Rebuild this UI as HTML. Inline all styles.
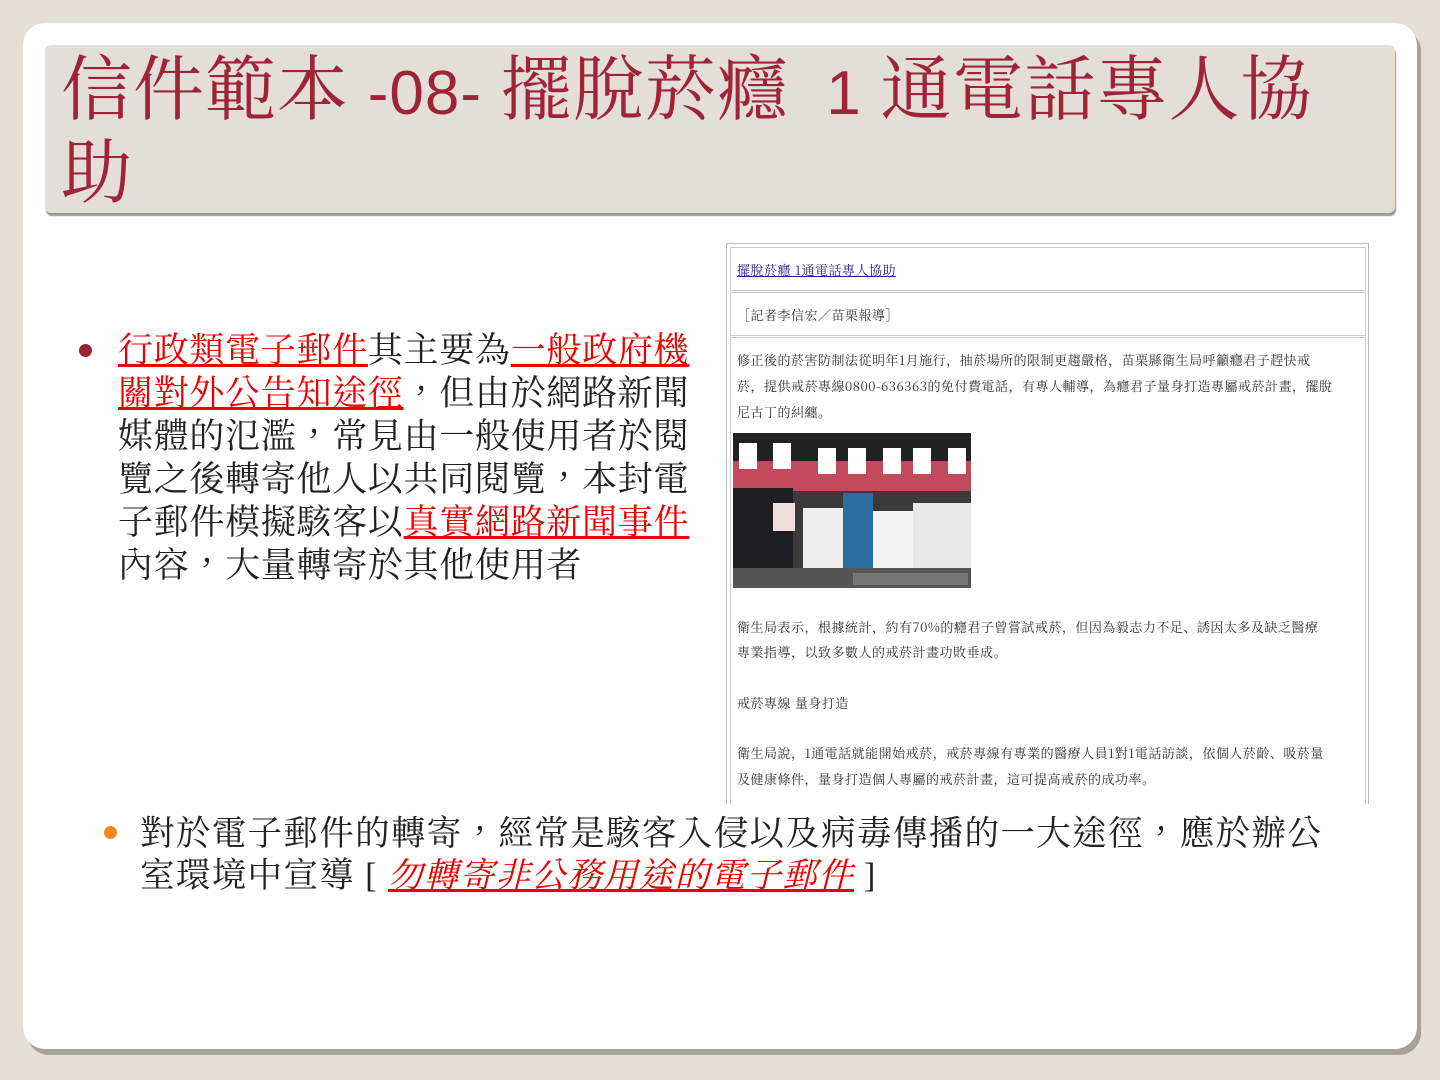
<!DOCTYPE html>
<html><head><meta charset="utf-8"><style>
body{margin:0;width:1440px;height:1080px;background:#e5dfd5;position:relative;overflow:hidden;font-family:"Liberation Serif","Noto Serif CJK TC","Noto Serif CJK SC",serif}
.card{position:absolute;left:23px;top:23px;width:1394px;height:1026px;background:#fff;border-radius:22px;box-shadow:4px 6px 0 #a8a196}
.title{position:absolute;left:45px;top:45px;width:1350px;height:168px;background:#e4dfd6;border-radius:6px;box-shadow:1px 3px 1px #9d978e}
.title div{position:absolute;left:16px;top:6px;font-family:"Liberation Serif","Noto Serif CJK SC",serif;font-size:71px;line-height:80px;color:#a02337;white-space:nowrap;letter-spacing:1px}
.title span{font-family:"Liberation Sans",sans-serif;font-size:62px}
.b1{position:absolute;left:118px;top:329px;width:590px;font-size:35px;letter-spacing:0.7px;line-height:43px;color:#222}
.dot{position:absolute;width:13px;height:13px;border-radius:50%}
a{color:#e00;text-decoration:underline}
.b2{position:absolute;left:140px;top:813px;width:1200px;font-size:34.5px;letter-spacing:1.35px;line-height:42px;color:#222}
.shot{position:absolute;left:726px;top:243px;width:641px;height:560px;border:1px solid #bbb;border-bottom:none;background:#fff;font-family:"Noto Serif CJK SC",serif;font-size:13px;letter-spacing:0.5px;color:#333;overflow:hidden}
.cell{position:absolute;left:3px;right:2px;border:1px solid #ccc}
.p{position:absolute;left:6px;white-space:nowrap}
.photo{position:absolute;width:238px;height:155px;background:#3a3a3a;overflow:hidden}
.photo i{position:absolute;display:block}
</style></head><body>
<div class="card"></div>
<div class="title"><div>信件範本 <span>-08-</span> 擺脫菸癮&nbsp; <span>1</span> 通電話專人協<br>助</div></div>
<div class="dot" style="left:79px;top:344px;background:#9b2335"></div>
<div class="b1"><a>行政類電子郵件</a>其主要為<a>一般政府機關對外公告知途徑</a>，但由於網路新聞媒體的氾濫，常見由一般使用者於閱覽之後轉寄他人以共同閱覽，本封電子郵件模擬駭客以<a>真實網路新聞事件</a>內容，大量轉寄於其他使用者</div>
<div class="shot">
<div class="cell" style="top:3px;height:42px"><span class="p" style="top:12px;color:#22228a;text-decoration:underline">擺脫菸癮 1通電話專人協助</span></div>
<div class="cell" style="top:48px;height:42px"><span class="p" style="top:12px">［記者李信宏／苗栗報導］</span></div>
<div class="cell" style="top:93px;height:480px;border-bottom:none">
<span class="p" style="top:12px">修正後的菸害防制法從明年1月施行，抽菸場所的限制更趨嚴格，苗栗縣衛生局呼籲癮君子趕快戒</span>
<span class="p" style="top:38px">菸，提供戒菸專線0800-636363的免付費電話，有專人輔導，為癮君子量身打造專屬戒菸計畫，擺脫</span>
<span class="p" style="top:64px">尼古丁的糾纏。</span>
<div class="photo" style="top:95px;left:2px">
<i style="left:0;top:0;width:238px;height:40px;background:#222"></i>
<i style="left:0;top:28px;width:238px;height:30px;background:#c34a5c"></i>
<i style="left:6px;top:10px;width:18px;height:26px;background:#fff"></i>
<i style="left:40px;top:10px;width:18px;height:26px;background:#fff"></i>
<i style="left:85px;top:15px;width:18px;height:26px;background:#fff"></i>
<i style="left:115px;top:15px;width:18px;height:26px;background:#fff"></i>
<i style="left:150px;top:15px;width:18px;height:26px;background:#fff"></i>
<i style="left:180px;top:15px;width:18px;height:26px;background:#fff"></i>
<i style="left:215px;top:15px;width:18px;height:26px;background:#fff"></i>
<i style="left:0;top:55px;width:60px;height:100px;background:#1d1d22"></i>
<i style="left:40px;top:70px;width:22px;height:28px;background:#f1dede"></i>
<i style="left:70px;top:75px;width:40px;height:80px;background:#eee"></i>
<i style="left:110px;top:60px;width:30px;height:95px;background:#2b6fa0"></i>
<i style="left:140px;top:78px;width:40px;height:77px;background:#f4f4f4"></i>
<i style="left:180px;top:70px;width:58px;height:85px;background:#e9e9e9"></i>
<i style="left:0;top:135px;width:238px;height:20px;background:#555"></i>
<i style="left:120px;top:140px;width:115px;height:12px;background:#777"></i>
</div>
<span class="p" style="top:279px">衛生局表示，根據統計，約有70%的癮君子曾嘗試戒菸，但因為毅志力不足、誘因太多及缺乏醫療</span>
<span class="p" style="top:304px">專業指導，以致多數人的戒菸計畫功敗垂成。</span>
<span class="p" style="top:355px">戒菸專線 量身打造</span>
<span class="p" style="top:405px">衛生局說，1通電話就能開始戒菸，戒菸專線有專業的醫療人員1對1電話訪談，依個人菸齡、吸菸量</span>
<span class="p" style="top:431px">及健康條件，量身打造個人專屬的戒菸計畫，這可提高戒菸的成功率。</span>
</div></div>
<div class="dot" style="left:104px;top:826px;background:#f08a1e"></div>
<div class="b2">對於電子郵件的轉寄，經常是駭客入侵以及病毒傳播的一大途徑，應於辦公室環境中宣導 [ <a style="font-style:italic">勿轉寄非公務用途的電子郵件</a> ]</div>
</body></html>
